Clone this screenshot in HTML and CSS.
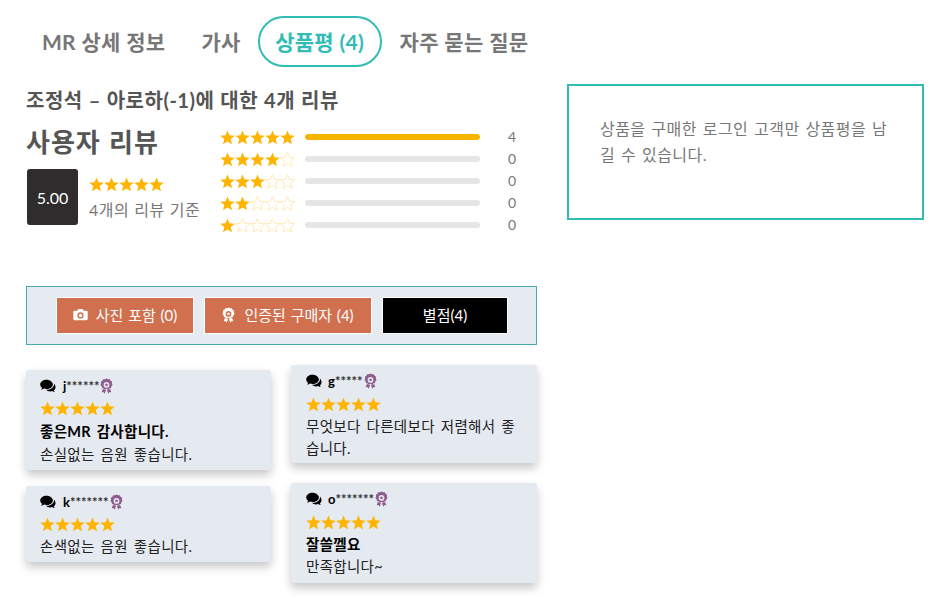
FILE: index.html
```html
<!DOCTYPE html>
<html lang="ko">
<head>
<meta charset="utf-8">
<title>상품평</title>
<link rel="stylesheet" href="styles.css">
</head>
<body>
<svg class="sprite" width="0" height="0" aria-hidden="true">
  <symbol id="star" viewBox="0 0 24 24"><path d="M12 .6L15.200 8.400 23.600 9 17.100 14.500 19.200 22.700 12 18.200 4.800 22.700 6.900 14.500 .4 9 8.800 8.400z"/></symbol>
  <symbol id="comments" viewBox="0 0 24 20"><path d="M9.800 .5C4.500 .5.300 3.700.300 7.600c0 2 1.100 3.800 2.900 5-.3 1-.9 2-1.800 2.900 1.800-.1 3.400-.7 4.700-1.600 1.200.3 2.400.5 3.700.5 5.300 0 9.500-3.100 9.500-6.800S15.100.5 9.800.5z"/><path d="M20.800 5.200c.2.700.3 1.500.3 2.200 0 2.500-1.400 4.600-3.500 6.100-2.100 1.500-4.800 2.300-7.600 2.300h-.9c1.500 1.500 3.700 2.300 6.100 2.300 1.100 0 2.100-.2 3.100-.5 1.100.8 2.500 1.300 4 1.400-.7-.7-1.200-1.500-1.500-2.400 1.500-1.100 2.500-2.600 2.500-4.300 0-2.700-.9-5-2.500-6.100z"/></symbol>
  <symbol id="camera" viewBox="0 0 24 20"><path fill-rule="evenodd" d="M8.500 1h7l1.500 3h4.500A2 2 0 0 1 23.500 6v11a2 2 0 0 1-2 2h-19a2 2 0 0 1-2-2V6a2 2 0 0 1 2-2H7zM12 6.500a5 5 0 1 0 0 10 5 5 0 0 0 0-10zm0 2.200a2.800 2.800 0 1 1 0 5.600 2.800 2.800 0 0 1 0-5.600z"/></symbol>
  <symbol id="award" viewBox="0 0 20 24"><path fill-rule="evenodd" d="M10 .3l2.400 1.300 2.700-.1 1.200 2.400 2.300 1.400-.3 2.700 1 2.500-1.800 2-.6 2.600-2.600.6-1.900 1.900-2.400-1.200-2.400 1.200-1.900-1.900-2.600-.6-.6-2.600-1.800-2 1-2.500-.3-2.700 2.300-1.400 1.200-2.400 2.700.1zM10 6a4.400 4.400 0 1 0 0 8.800A4.400 4.400 0 0 0 10 6z"/><path d="M10 7.300l.9 1.900 2 .2-1.500 1.400.4 2-1.800-1-1.800 1 .4-2-1.500-1.400 2-.2z"/><path d="M4.500 16.500l2.800 1 2 1.300-2.400 5-1.500-2.500-2.900.4zM15.500 16.500l-2.800 1-2 1.300 2.400 5 1.500-2.500 2.900.4z"/></symbol>
</svg>

<main class="page">
  <section class="main-col">
    <nav class="tabs">
      <a class="tab">MR 상세 정보</a>
      <a class="tab">가사</a>
      <a class="tab tab-active">상품평 (4)</a>
      <a class="tab">자주 묻는 질문</a>
    </nav>

    <h2 class="review-title">조정석 – 아로하(-1)에 대한 4개 리뷰</h2>

    <div class="summary">
      <div class="summary-left">
        <h3 class="summary-title">사용자 리뷰</h3>
        <div class="score-row">
          <div class="score">5.00</div>
          <div class="score-info">
            <span class="stars"><svg><use href="#star"/></svg><svg><use href="#star"/></svg><svg><use href="#star"/></svg><svg><use href="#star"/></svg><svg><use href="#star"/></svg></span>
            <p class="score-note">4개의 리뷰 기준</p>
          </div>
        </div>
      </div>
      <div class="bars">
        <div class="bar-row">
          <span class="stars"><svg><use href="#star"/></svg><svg><use href="#star"/></svg><svg><use href="#star"/></svg><svg><use href="#star"/></svg><svg><use href="#star"/></svg></span>
          <span class="bar"><span class="bar-fill"></span></span><span class="bar-count">4</span>
        </div>
        <div class="bar-row">
          <span class="stars"><svg><use href="#star"/></svg><svg><use href="#star"/></svg><svg><use href="#star"/></svg><svg><use href="#star"/></svg><svg class="off"><use href="#star"/></svg></span>
          <span class="bar"></span><span class="bar-count">0</span>
        </div>
        <div class="bar-row">
          <span class="stars"><svg><use href="#star"/></svg><svg><use href="#star"/></svg><svg><use href="#star"/></svg><svg class="off"><use href="#star"/></svg><svg class="off"><use href="#star"/></svg></span>
          <span class="bar"></span><span class="bar-count">0</span>
        </div>
        <div class="bar-row">
          <span class="stars"><svg><use href="#star"/></svg><svg><use href="#star"/></svg><svg class="off"><use href="#star"/></svg><svg class="off"><use href="#star"/></svg><svg class="off"><use href="#star"/></svg></span>
          <span class="bar"></span><span class="bar-count">0</span>
        </div>
        <div class="bar-row">
          <span class="stars"><svg><use href="#star"/></svg><svg class="off"><use href="#star"/></svg><svg class="off"><use href="#star"/></svg><svg class="off"><use href="#star"/></svg><svg class="off"><use href="#star"/></svg></span>
          <span class="bar"></span><span class="bar-count">0</span>
        </div>
      </div>
    </div>

    <div class="filters">
      <a class="filter filter-photo"><svg class="filter-icon cam"><use href="#camera"/></svg>사진 포함 (0)</a>
      <a class="filter filter-verified"><svg class="filter-icon med"><use href="#award"/></svg>인증된 구매자 (4)</a>
      <a class="filter filter-rating">별점(4)</a>
    </div>

    <div class="reviews">
      <div class="review-col">
        <article class="card card-a">
          <div class="author"><svg class="bubble"><use href="#comments"/></svg><b>j</b><span class="mask">******</span><svg class="medal"><use href="#award"/></svg></div>
          <span class="stars"><svg><use href="#star"/></svg><svg><use href="#star"/></svg><svg><use href="#star"/></svg><svg><use href="#star"/></svg><svg><use href="#star"/></svg></span>
          <h4 class="card-title">좋은MR 감사합니다.</h4>
          <p class="card-text">손실없는 음원 좋습니다.</p>
        </article>
        <article class="card card-c">
          <div class="author"><svg class="bubble"><use href="#comments"/></svg><b>k</b><span class="mask">*******</span><svg class="medal"><use href="#award"/></svg></div>
          <span class="stars"><svg><use href="#star"/></svg><svg><use href="#star"/></svg><svg><use href="#star"/></svg><svg><use href="#star"/></svg><svg><use href="#star"/></svg></span>
          <p class="card-text">손색없는 음원 좋습니다.</p>
        </article>
      </div>
      <div class="review-col review-col-right">
        <article class="card card-b">
          <div class="author"><svg class="bubble"><use href="#comments"/></svg><b>g</b><span class="mask">*****</span><svg class="medal"><use href="#award"/></svg></div>
          <span class="stars"><svg><use href="#star"/></svg><svg><use href="#star"/></svg><svg><use href="#star"/></svg><svg><use href="#star"/></svg><svg><use href="#star"/></svg></span>
          <p class="card-text">무엇보다 다른데보다 저렴해서 좋습니다.</p>
        </article>
        <article class="card card-d">
          <div class="author"><svg class="bubble"><use href="#comments"/></svg><b>o</b><span class="mask">*******</span><svg class="medal"><use href="#award"/></svg></div>
          <span class="stars"><svg><use href="#star"/></svg><svg><use href="#star"/></svg><svg><use href="#star"/></svg><svg><use href="#star"/></svg><svg><use href="#star"/></svg></span>
          <h4 class="card-title">잘쓸껠요</h4>
          <p class="card-text">만족합니다~</p>
        </article>
      </div>
    </div>
  </section>

  <aside class="side-col">
    <div class="notice">상품을 구매한 로그인 고객만 상품평을 남길 수 있습니다.</div>
  </aside>
</main>
</body>
</html>
```

FILE: styles.css
```css
* { box-sizing: border-box; }
html, body { margin: 0; padding: 0; background: #fff; }
body {
  font-family: Lato, "Noto Sans CJK KR", "Noto Sans", sans-serif;
  color: #000;
  overflow: hidden;
}
.sprite { position: absolute; }
.page {
  display: flex;
  align-items: flex-start;
  gap: 30px;
  padding: 16px 22px 0 26px;
  height: 609px;
}
.main-col { width: 511px; flex: none; }
.side-col { width: 357px; flex: none; padding-top: 68px; }

.tabs { display: flex; align-items: center; padding-left: 16px; height: 51px; }
.tab {
  font-size: 21px;
  font-weight: 700;
  color: #777;
  line-height: 24px;
  letter-spacing: .25px;
  word-spacing: .3px;
  margin-right: 36px;
  white-space: nowrap;
}
.tab:nth-child(2) { margin-right: 17px; }
.tab-active {
  color: #2fbdb5;
  border: 2.500px solid #2fbdb5;
  border-radius: 26px;
  height: 51px;
  width: 124px;
  margin-right: 18px;
  display: flex;
  align-items: center;
  justify-content: center;
}
.tab:last-child { margin-right: 0; }

.review-title {
  margin: 20px 0 0;
  font-size: 20px;
  font-weight: 700;
  line-height: 26px;
  letter-spacing: .5px;
  word-spacing: .6px;
  color: #555;
  white-space: nowrap;
}

.summary { display: flex; margin-top: 10px; height: 141px; }
.summary-left { width: 194px; flex: none; }
.summary-title {
  margin: 0;
  font-size: 26px;
  line-height: 38px;
  letter-spacing: 1px;
  word-spacing: 1px;
  font-weight: 700;
  color: #555;
}
.score-row { display: flex; margin: 8px 0 0 1px; }
.score {
  width: 51px;
  height: 56px;
  background: #2e2c2c;
  border-radius: 3px;
  color: #fff;
  font-size: 16px;
  display: flex;
  align-items: center;
  justify-content: center;
}
.score-info { margin-left: 11px; padding-top: 8px; }
.score-note { margin: 6px 0 0; font-size: 16px; line-height: 24px; letter-spacing: .5px; word-spacing: .5px; color: #777; white-space: nowrap; }

.stars { display: flex; width: 75px; height: 15px; line-height: 0; }
.stars svg { width: 15px; height: 15px; fill: #ffb400; flex: none; }
.stars svg.off { fill: #fff; stroke: #ffe7b0; stroke-width: 1.500; }

.bars { padding-top: 3px; }
.bar-row { display: flex; align-items: center; height: 22px; }
.bar { width: 175px; height: 6px; background: #e5e5e5; border-radius: 3px; margin-left: 10px; overflow: hidden; }
.bar-fill { display: block; width: 100%; height: 100%; background: #f7b500; border-radius: 3px; }
.bar-count { margin: 0 0 2px 28px; font-size: 14px; color: #777; }

.filters {
  margin-top: 22px;
  height: 59px;
  background: #e6ebf2;
  border: 1px solid #4aa9ab;
  display: flex;
  align-items: center;
  justify-content: center;
  gap: 10px;
  padding-left: 1px;
}
.filter {
  flex: none;
  height: 37px;
  border: 1px solid #fff;
  color: #fff;
  font-size: 15px;
  word-spacing: 1px;
  padding-bottom: 2px;
  display: flex;
  align-items: center;
  justify-content: center;
  white-space: nowrap;
}
.filter-photo { width: 138px; background: #d0704f; }
.filter-verified { width: 168px; background: #d0704f; }
.filter-rating { width: 126px; background: #000; }
.filter-icon { fill: #fff; margin-right: 8px; flex: none; }
.filter-icon.cam { width: 15px; height: 13px; }
.filter-icon.med { width: 13px; height: 16px; margin-right: 9px; }

.reviews { display: flex; justify-content: space-between; margin-top: 20px; }
.review-col { width: 245px; display: flex; flex-direction: column; gap: 16px; padding-top: 5px; }
.review-col-right { width: 246px; gap: 20px; padding-top: 0; }
.card {
  background: #e5e9f0;
  border-radius: 3px;
  box-shadow: 0 5px 10px rgba(0, 0, 0, .22);
  padding: 6px 14px 0 14px;
  font-size: 13px;
  color: #000;
}
.review-col-right .card { padding-left: 15px; }
.card-a { height: 100px; }
.card-b { height: 98px; }
.card-c { height: 76px; }
.card-d { height: 100px; }
.author { display: flex; align-items: center; height: 20px; font-size: 13px; line-height: 20px; }
.author b { font-weight: 700; }
.mask { color: #333; font-weight: 700; }
.bubble { width: 16px; height: 14px; fill: #000; margin-right: 7px; flex: none; }
.review-col-right .bubble { margin-right: 6px; }
.medal { width: 13px; height: 16px; fill: #8f5c8f; flex: none; margin-left: 1px; }
.card .stars { margin-top: 5px; }
.review-col-right .card .stars { margin-top: 6px; }
.card-title { margin: 4px 0 0; font-size: 14.500px; line-height: 22px; letter-spacing: .3px; word-spacing: 2px; font-weight: 700; color: #000; }
.card-a .card-title { margin: 5px 0 1px; }
.card-text { margin: 0; font-size: 14.500px; line-height: 22px; letter-spacing: .3px; word-spacing: 2px; color: #222; word-break: break-all; }
.card-b .card-text { margin-top: 4px; }
.card-c .card-text { margin-top: 4px; }

.notice {
  height: 136px;
  border: 2px solid #2fbdb5;
  padding: 30px 31px 0 31px;
  font-size: 16px;
  line-height: 26px;
  letter-spacing: .45px;
  word-spacing: 1.300px;
  color: #777;
  word-break: break-all;
}
```
